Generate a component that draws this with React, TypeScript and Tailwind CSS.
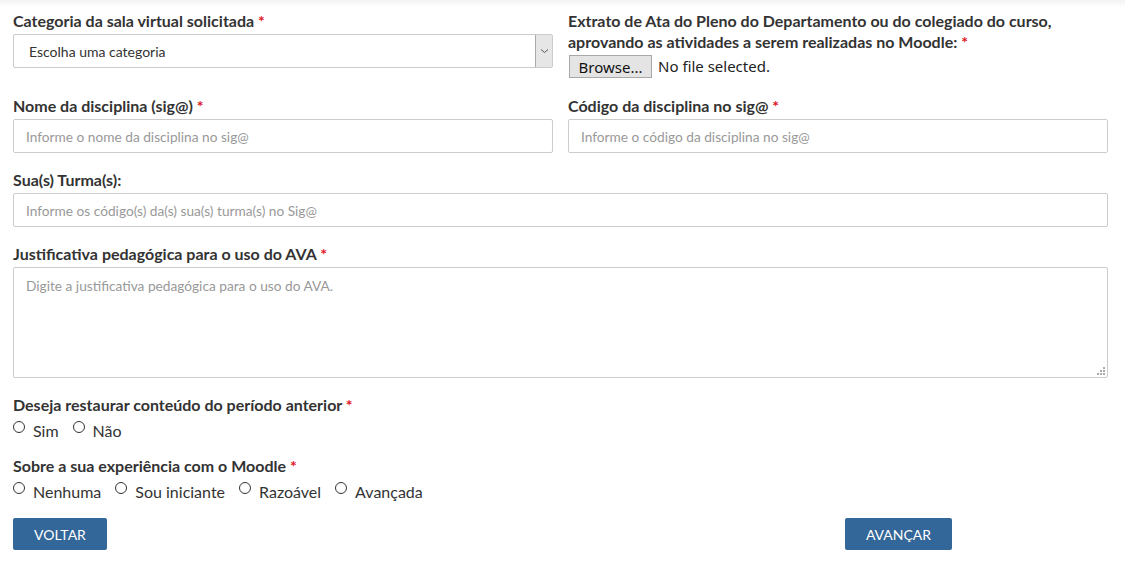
import React from "react";

const lato = { fontFamily: "Lato, 'Open Sans', sans-serif" };

function Label({ children, req }: { children: React.ReactNode; req?: boolean }) {
  return (
    <label className="block text-[16px] leading-[21px] font-bold text-[#333] mb-[3px]">
      {children}
      {req && <span className="text-[#e0141e]"> *</span>}
    </label>
  );
}

function TextInput({ placeholder }: { placeholder: string }) {
  return (
    <input
      type="text"
      placeholder={placeholder}
      className="block w-full h-[34px] border border-[#ccc] rounded-[2px] px-[12px] text-[13.7px] text-[#555] placeholder:text-[#999] bg-white outline-none"
      style={lato}
    />
  );
}

function Radio({ label }: { label: string }) {
  return (
    <span className="inline-flex items-start mr-[14px]">
      <span className="mt-[4px] w-[12px] h-[12px] rounded-full border border-[#333] bg-white shrink-0" />
      <span className="ml-[8px] mt-[4px] text-[16px] leading-[20px] text-[#333]">{label}</span>
    </span>
  );
}

export default function App() {
  return (
    <div className="w-[1125px] h-[570px] bg-white relative overflow-hidden" style={lato}>
      <div className="absolute top-0 left-0 right-0 h-[7px] bg-gradient-to-b from-[#f2f2f2] to-white" />
      <div className="relative pl-[13px] pr-[17px] pt-[10px]">
        <div className="grid grid-cols-2 gap-x-[15px]">
          <div>
            <Label req>Categoria da sala virtual solicitada</Label>
            <div className="flex h-[34px] border border-[#ccc] rounded-[2px] bg-white">
              <div className="flex-1 flex items-center pl-[15px] text-[14px] text-[#333]">Escolha uma categoria</div>
              <div className="w-[17px] bg-[#e6e6e6] border-l border-[#aaa] flex items-center justify-center">
                <svg width="9" height="6" viewBox="0 0 9 6">
                  <path d="M1 1.5 L4.5 4.5 L8 1.5" fill="none" stroke="#555" strokeWidth="1" />
                </svg>
              </div>
            </div>
          </div>
          <div>
            <Label req>
              Extrato de Ata do Pleno do Departamento ou do colegiado do curso,
              <br />
              aprovando as atividades a serem realizadas no Moodle:
            </Label>
            <div className="flex items-center h-[23px]">
              <button
                className="h-[23px] w-[83px] bg-[#e4e4e4] border border-[#a8a8a8] text-[15px] leading-[20px] text-[#111] ml-[1px]"
                style={{ fontFamily: "'Noto Sans', sans-serif" }}
              >
                Browse...
              </button>
              <span className="ml-[6px] text-[15px] text-[#222]" style={{ fontFamily: "'Noto Sans', sans-serif" }}>
                No file selected.
              </span>
            </div>
          </div>

          <div className="mt-[17px]">
            <Label req>Nome da disciplina (sig@)</Label>
            <TextInput placeholder="Informe o nome da disciplina no sig@" />
          </div>
          <div className="mt-[17px]">
            <Label req>Código da disciplina no sig@</Label>
            <TextInput placeholder="Informe o código da disciplina no sig@" />
          </div>
        </div>

        <div className="mt-[16px]">
          <Label>Sua(s) Turma(s):</Label>
          <TextInput placeholder="Informe os código(s) da(s) sua(s) turma(s) no Sig@" />
        </div>

        <div className="mt-[16px]">
          <Label req>Justificativa pedagógica para o uso do AVA</Label>
          <div className="relative">
            <textarea
              placeholder="Digite a justificativa pedagógica para o uso do AVA."
              className="block w-full h-[111px] border border-[#ccc] rounded-[2px] px-[12px] py-[8px] text-[13.7px] text-[#555] placeholder:text-[#999] outline-none resize-none"
              style={lato}
            />
            <svg className="absolute right-[3px] bottom-[3px]" width="8" height="8" viewBox="0 0 8 8">
              <rect x="6" y="0" width="2" height="2" fill="#aaa" />
              <rect x="3" y="3" width="2" height="2" fill="#aaa" />
              <rect x="6" y="3" width="2" height="2" fill="#aaa" />
              <rect x="0" y="6" width="2" height="2" fill="#aaa" />
              <rect x="3" y="6" width="2" height="2" fill="#aaa" />
              <rect x="6" y="6" width="2" height="2" fill="#aaa" />
            </svg>
          </div>
        </div>

        <div className="mt-[16px]">
          <Label req>Deseja restaurar conteúdo do período anterior</Label>
          <div className="flex -mt-[1px]">
            <Radio label="Sim" />
            <Radio label="Não" />
          </div>
        </div>

        <div className="mt-[14px]">
          <Label req>Sobre a sua experiência com o Moodle</Label>
          <div className="flex -mt-[1px]">
            <Radio label="Nenhuma" />
            <Radio label="Sou iniciante" />
            <Radio label="Razoável" />
            <Radio label="Avançada" />
          </div>
        </div>

        <div className="grid grid-cols-2 gap-x-[15px] mt-[16px]">
          <div>
            <button className="h-[32px] w-[94px] bg-[#336699] rounded-[2px] text-white text-[14px] uppercase">
              Voltar
            </button>
          </div>
          <div>
            <button className="ml-[277px] h-[32px] w-[107px] bg-[#336699] rounded-[2px] text-white text-[14px] uppercase">
              Avançar
            </button>
          </div>
        </div>
      </div>
    </div>
  );
}
